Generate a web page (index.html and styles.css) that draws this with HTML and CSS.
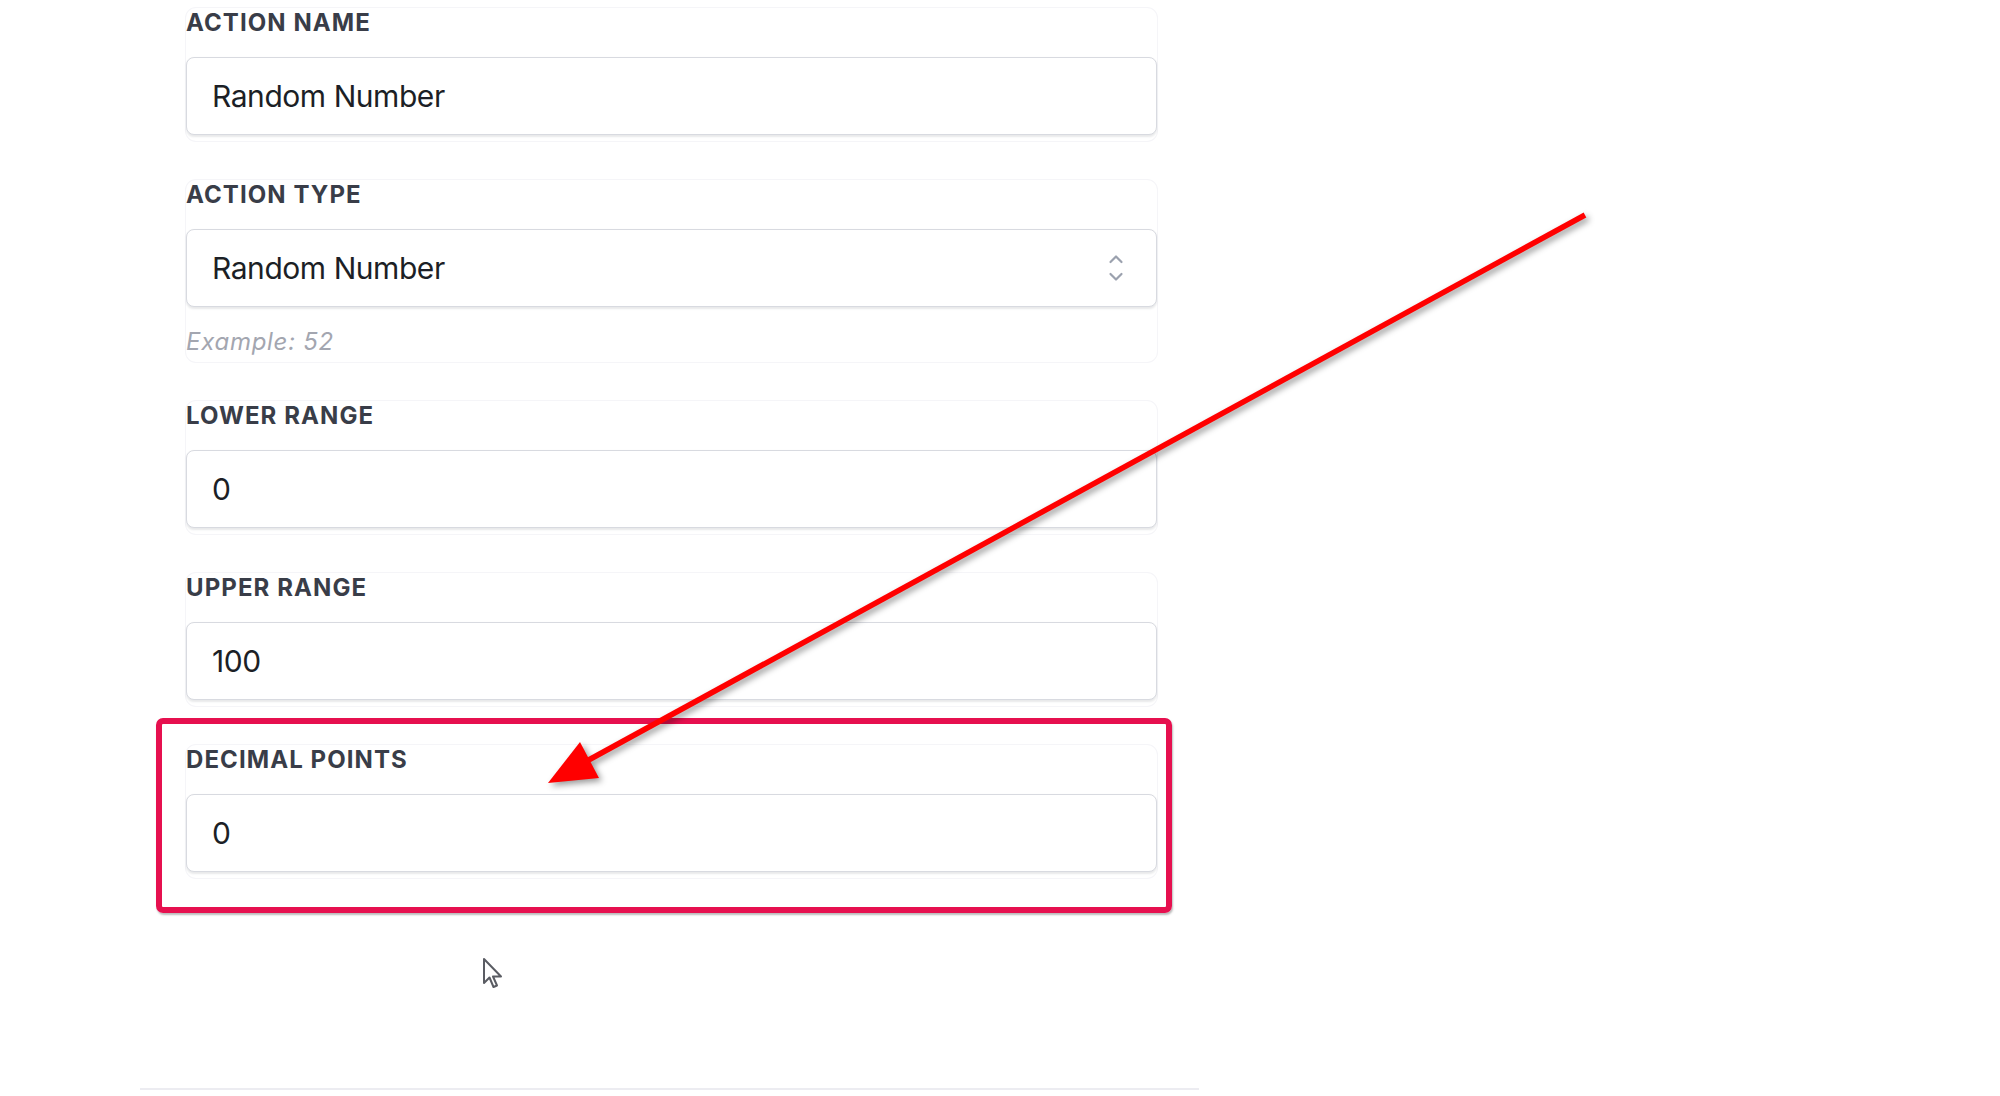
FILE: index.html
```html
<!DOCTYPE html>
<html lang="en">
<head>
<meta charset="utf-8">
<title>Random Number Action</title>
<link rel="stylesheet" href="styles.css">
</head>
<body>
<div class="panel">
  <div class="field">
    <div class="label">ACTION NAME</div>
    <div class="input">Random Number</div>
  </div>
  <div class="field">
    <div class="label">ACTION TYPE</div>
    <div class="input select">
      <span>Random Number</span>
      <svg class="chev" width="16" height="30" viewBox="0 0 16 30"><path d="M2.5 9 L8 3.5 L13.5 9" /><path d="M2.5 21 L8 26.5 L13.5 21" /></svg>
    </div>
    <div class="helper">Example: 52</div>
  </div>
  <div class="field">
    <div class="label">LOWER RANGE</div>
    <div class="input">0</div>
  </div>
  <div class="field">
    <div class="label">UPPER RANGE</div>
    <div class="input">100</div>
  </div>
  <div class="field">
    <div class="label">DECIMAL POINTS</div>
    <div class="input">0</div>
  </div>
</div>

<div class="highlight"></div>

<svg class="annot" width="2000" height="1096" viewBox="0 0 2000 1096">
  <g class="arrow">
    <line x1="1585" y1="215" x2="585" y2="762" />
    <polygon points="548,783 599,778 580,742" />
  </g>
</svg>

<svg class="cursor" width="24" height="34" viewBox="0 0 24 34">
  <path d="M2 2 L2 26 L7.5 20.5 L11.5 30 L15 28.5 L11 19.5 L19 19.5 Z" />
</svg>
</body>
</html>
```

FILE: styles.css
```css
html, body {
  margin: 0;
  padding: 0;
  background: #ffffff;
}

body {
  font-family: Inter, "Noto Sans", "Liberation Sans", sans-serif;
  width: 2000px;
  height: 1096px;
  position: relative;
  overflow: hidden;
}

.panel {
  margin-left: 140px;
  width: 1059px;
  height: 1090px;
  box-sizing: border-box;
  padding: 8px 42px 0 46px;
  border-bottom: 2px solid #ececf1;
  display: flex;
  flex-direction: column;
  gap: 39px;
}

.field {
  display: flex;
  flex-direction: column;
  padding-bottom: 6px;
  border-radius: 10px;
  box-shadow: 0 0 0 1px #f5f5f8;
}

.label {
  height: 30px;
  line-height: 30px;
  font-size: 24px;
  font-weight: 700;
  letter-spacing: 0.045em;
  color: #393d48;
  margin-bottom: 19px;
}

.input {
  height: 78px;
  box-sizing: border-box;
  border: 1.5px solid #d8dae0;
  border-radius: 8px;
  box-shadow: 0 1.5px 2px rgba(30, 35, 50, 0.10);
  padding: 0 32px 0 25px;
  display: flex;
  align-items: center;
  font-size: 30px;
  letter-spacing: -0.015em;
  color: #1c1f26;
  background: #ffffff;
}

.select {
  justify-content: space-between;
}

.chev {
  fill: none;
  stroke: #9ba1ae;
  stroke-width: 2.2;
  stroke-linecap: round;
  stroke-linejoin: round;
}

.helper {
  margin-top: 21px;
  height: 28px;
  line-height: 28px;
  font-size: 24px;
  font-style: italic;
  color: #a3a6b0;
  letter-spacing: 0.03em;
}

.highlight {
  position: absolute;
  left: 156px;
  top: 718px;
  width: 1016px;
  height: 195px;
  box-sizing: border-box;
  border: 6px solid #e6104f;
  border-radius: 7px;
  box-shadow: 1px 2px 2px rgba(60, 60, 60, 0.35);
}

.annot {
  position: absolute;
  left: 0;
  top: 0;
  pointer-events: none;
}

.arrow {
  filter: drop-shadow(3px 3px 3px rgba(0, 0, 0, 0.4));
}

.arrow line {
  stroke: #ff0000;
  stroke-width: 5.5;
}

.arrow polygon {
  fill: #ff0000;
}

.cursor {
  position: absolute;
  left: 482px;
  top: 957px;
  fill: #ffffff;
  stroke: #5a5c63;
  stroke-width: 2;
  stroke-linejoin: round;
}
```
